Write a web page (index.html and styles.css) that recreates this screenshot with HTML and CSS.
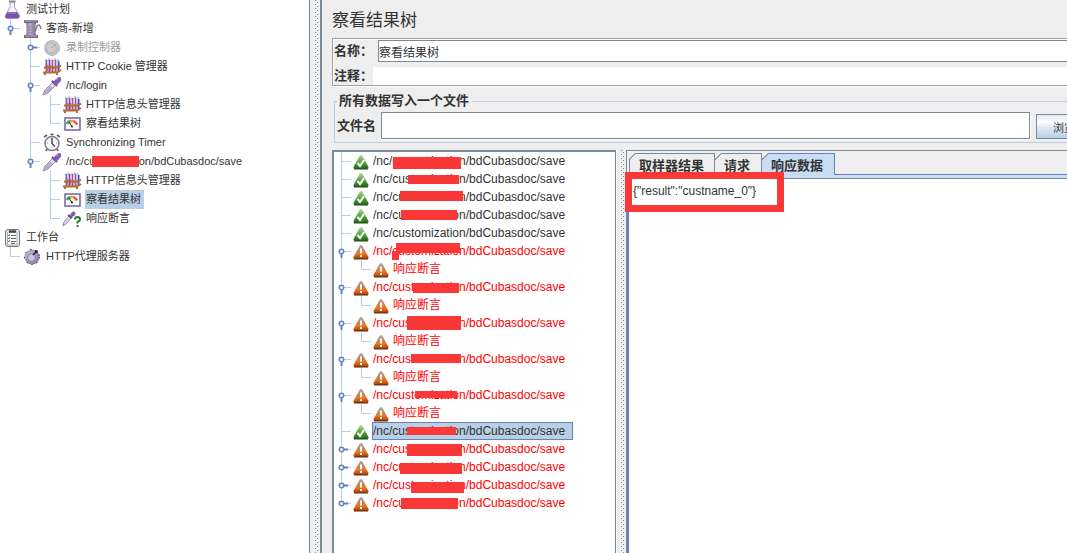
FILE: index.html
```
<!DOCTYPE html>
<html lang="zh-CN">
<head>
    <meta charset="UTF-8">
    <meta name="viewport" content="width=device-width, initial-scale=1.0">
    <title>察看结果树</title>
    <link rel="stylesheet" href="styles.css">
</head>
<body>
    <!-- Icon definitions -->
    <svg class="defs" width="0" height="0" aria-hidden="true">
        <defs>
            <linearGradient id="gGreen" x1="0" y1="0" x2="0" y2="1">
                <stop offset="0" stop-color="#b5d3a4"/><stop offset=".5" stop-color="#58a83c"/><stop offset="1" stop-color="#1d6414"/>
            </linearGradient>
            <linearGradient id="gOrange" x1="0" y1="0" x2="0" y2="1">
                <stop offset="0" stop-color="#a9a9a9"/><stop offset=".35" stop-color="#c08a60"/><stop offset=".65" stop-color="#ee7420"/><stop offset="1" stop-color="#9a3c05"/>
            </linearGradient>
            <radialGradient id="gDisc" cx=".4" cy=".4" r=".6">
                <stop offset="0" stop-color="#dcd6ec"/><stop offset="1" stop-color="#8578a8"/>
            </radialGradient>
            <linearGradient id="gSpool">
                <stop offset="0" stop-color="#746786"/><stop offset=".4" stop-color="#b9afc9"/><stop offset="1" stop-color="#74687f"/>
            </linearGradient>
        </defs>
        <symbol id="flask" viewBox="0 0 20 20">
            <path d="M8 2v5L3.500 15.500Q3 18 5 18h11q2-.500 1.500-2.500L12.500 7V2z" fill="#f4f2f8" stroke="#a9a4b4"/>
            <path d="M5.500 12h9.500l2.500 4q0 2.500-2 2.500H5q-2.500-.500-1.500-3z" fill="#7b51b0"/>
            <path d="M6 13h8" stroke="#a98ad0"/>
            <path d="M7 1.500h6.500" stroke="#8d8798" stroke-width="2"/>
        </symbol>
        <symbol id="spool" viewBox="0 0 20 20">
            <path d="M3.500 3h11l-1 3v8l1 3h-11l1-3V6z" fill="url(#gSpool)"/>
            <path d="M2 2.500h14M2 17.500h14" stroke="#75698a" stroke-width="3"/>
            <path d="M3 2h12M3 17h12" stroke="#b9afc6"/>
            <path d="M5 8h8M5 11h8M5 14h8" stroke="#9589a6"/>
            <path d="M13 13l2-6q2-2 3 0l1 3" fill="none" stroke="#84798f" stroke-width="1.500"/>
        </symbol>
        <symbol id="disabled" viewBox="0 0 20 20">
            <circle cx="10" cy="10" r="7.500" fill="#c5c5c5" stroke="#bbb"/>
            <circle cx="9" cy="10" r="5" fill="#cdcdcd" stroke="#bbb"/>
            <path d="M9 10l5-4M5 5l1 1M4 12h2M10 16v-2M15 13l-1-1" stroke="#a5a5a5"/>
        </symbol>
        <symbol id="rack" viewBox="0 0 20 20">
            <path d="M4.500 3v12M13.500 3v12" stroke="#7264ba" stroke-width="2"/>
            <path d="M7.500 3v12M16.500 4v10" stroke="#514dbd" stroke-width="2"/>
            <path d="M10.500 3v12" stroke="#e33560" stroke-width="2"/>
            <path d="M5 7v7M8 8v5" stroke="#d83c65"/>
            <path d="M6 4v4M9 3v5M12 4v5M15 3v5" stroke="#e4e1f4"/>
            <path d="M3 3h2M6 2h2M9 3h2M12 2h2M15 3h2" stroke="#9b93b6"/>
            <path d="M2 10.500h14l3-2M1 15.500h14l4-2.500M3 15v3M15 15v3" fill="none" stroke="#b46a2a" stroke-width="2"/>
        </symbol>
        <symbol id="dropper" viewBox="0 0 20 20">
            <path d="M1 19l2-5L11 6l3 3-8 8z" fill="#ddd8e6" stroke="#948ba2"/>
            <path d="M3 15l5-5 3 2-5 5-4 1z" fill="#b5a6d2"/>
            <path d="M10 5l5 5" stroke="#5c4788" stroke-width="2"/>
            <path d="M11 6l4-4q3-2 4 0t-1 4l-4 4z" fill="#7f5cb5"/>
            <path d="M14 4l2-1.500" stroke="#b49bd8"/>
        </symbol>
        <symbol id="gauge" viewBox="0 0 20 20">
            <path d="M3 4h15v12H3z" fill="#fff" stroke="#7462a5" stroke-width="1.500"/>
            <path d="M5 10q1-3 4-3" fill="none" stroke="#2eae55" stroke-width="2.500"/>
            <path d="M8 7.500q3-1 5 0" fill="none" stroke="#f49a4a" stroke-width="2.500"/>
            <path d="M12 7.500q2 1 3 3" fill="none" stroke="#ee4a35" stroke-width="2.500"/>
            <path d="M7 8l3 4.500" stroke="#222"/>
            <circle cx="10" cy="12.500" r="1" fill="#222"/>
        </symbol>
        <symbol id="clock" viewBox="0 0 20 20">
            <path d="M2 4l3-2M15 2l3 2M5 16l-1 2M15 16l1 2" stroke="#6d667a" stroke-width="2"/>
            <circle cx="10" cy="10.500" r="7" fill="#f8f8fb" stroke="#827b8d" stroke-width="1.500"/>
            <path d="M8.500 1.500h3M10 5v5.500l3 3" fill="none" stroke="#4b4556" stroke-width="1.500"/>
            <path d="M5 10h1M14 10h1M10 14v1" stroke="#999"/>
        </symbol>
        <symbol id="assert" viewBox="0 0 20 20">
            <path d="M1 17l1-4 6-7 2 2-6 7z" fill="#ddd8e6" stroke="#948ba2"/>
            <path d="M6 6l4 3" stroke="#5c4788" stroke-width="2"/>
            <path d="M8 6l2-3q2-1 3 0t0 3l-2 2z" fill="#7f5cb5"/>
            <path d="M13 10.500q0-2.500 2.500-2.500t2.500 2.500q0 1.500-2.500 2.500v1.500M15.500 16v2" fill="none" stroke="#287a28" stroke-width="2"/>
        </symbol>
        <symbol id="clipboard" viewBox="0 0 20 20">
            <rect x="3.500" y="1.500" width="14" height="17" rx="2.500" fill="#ededf0" stroke="#77757c"/>
            <path d="M5.500 4h9.500v13H5.500z" fill="#fff" stroke="#aaa"/>
            <path d="M7 3.500h7" stroke="#444" stroke-width="2.500"/>
            <path d="M9 7.500h5M9 10.500h5M9 13.500h5M9 15.500h4" stroke="#666"/>
            <path d="M6 7l1 1 1-2M6 10l1 1 1-2M6 13l1 1 1-2" fill="none" stroke="#3b9a48"/>
        </symbol>
        <symbol id="proxy" viewBox="0 0 20 20">
            <circle cx="10" cy="10" r="7.500" fill="url(#gDisc)"/>
            <circle cx="10" cy="10" r="7.500" fill="none" stroke="#34303e" stroke-dasharray="1.500 4"/>
            <circle cx="9.500" cy="10.500" r="4" fill="#c9c1dd" stroke="#8579a5"/>
            <path d="M11 8l4-4M13 4h2v2" fill="none" stroke="#222" stroke-width="1.500"/>
        </symbol>
        <symbol id="ok" viewBox="0 0 16 16">
            <path d="M6.500 2Q8 0 9.500 2L15.500 13Q16 15 14 15H2Q0 15 .500 13z" fill="url(#gGreen)"/>
            <path d="M1 15h14" stroke="#234c1b"/>
            <path d="M4.500 9l2.500 3L11 6" fill="none" stroke="#fff" stroke-width="2"/>
        </symbol>
        <symbol id="warn" viewBox="0 0 16 16">
            <path d="M6.500 2Q8 0 9.500 2L15.500 13Q16 15 14 15H2Q0 15 .500 13z" fill="url(#gOrange)"/>
            <path d="M1 15h14" stroke="#5a2b12"/>
            <path d="M8 4.500v5M8 11v2" stroke="#fff" stroke-width="2"/>
        </symbol>
        <symbol id="open" viewBox="0 0 12 17">
            <circle cx="4.500" cy="8.500" r="2.250" fill="#fff" stroke="#6382bf" stroke-width="1.500"/>
            <path d="M4.500 11v4" stroke="#6382bf" stroke-width="2"/>
        </symbol>
        <symbol id="closed" viewBox="0 0 12 17">
            <circle cx="4.500" cy="8.500" r="2.250" fill="#fff" stroke="#6382bf" stroke-width="1.500"/>
            <path d="M7 8.500h4" stroke="#6382bf" stroke-width="2"/>
        </symbol>
    </svg>

    <div class="app">
        <nav class="plan">
            <ul class="tree plan-tree">
                <li>
                    <div class="row"><svg class="icon"><use href="#flask"/></svg><span class="label">测试计划</span></div>
                    <ul>
                        <li>
                            <div class="row"><button class="handle" aria-label="折叠"><svg><use href="#open"/></svg></button><svg class="icon"><use href="#spool"/></svg><span class="label">客商-新增</span></div>
                            <ul>
                                <li><div class="row"><button class="handle" aria-label="展开"><svg><use href="#closed"/></svg></button><svg class="icon"><use href="#disabled"/></svg><span class="label off">录制控制器</span></div></li>
                                <li><div class="row"><svg class="icon"><use href="#rack"/></svg><span class="label">HTTP Cookie 管理器</span></div></li>
                                <li>
                                    <div class="row"><button class="handle" aria-label="折叠"><svg><use href="#open"/></svg></button><svg class="icon"><use href="#dropper"/></svg><span class="label">/nc/login</span></div>
                                    <ul>
                                        <li><div class="row"><svg class="icon"><use href="#rack"/></svg><span class="label">HTTP信息头管理器</span></div></li>
                                        <li><div class="row"><svg class="icon"><use href="#gauge"/></svg><span class="label">察看结果树</span></div></li>
                                    </ul>
                                </li>
                                <li><div class="row"><svg class="icon"><use href="#clock"/></svg><span class="label">Synchronizing Timer</span></div></li>
                                <li>
                                    <div class="row"><button class="handle" aria-label="折叠"><svg><use href="#open"/></svg></button><svg class="icon"><use href="#dropper"/></svg><span class="label">/nc/customization/bdCubasdoc/save<i class="mask m0"></i></span></div>
                                    <ul>
                                        <li><div class="row"><svg class="icon"><use href="#rack"/></svg><span class="label">HTTP信息头管理器</span></div></li>
                                        <li><div class="row"><svg class="icon"><use href="#gauge"/></svg><span class="label selected">察看结果树</span></div></li>
                                        <li><div class="row"><svg class="icon"><use href="#assert"/></svg><span class="label">响应断言</span></div></li>
                                    </ul>
                                </li>
                            </ul>
                        </li>
                    </ul>
                </li>
                <li>
                    <div class="row"><svg class="icon"><use href="#clipboard"/></svg><span class="label">工作台</span></div>
                    <ul>
                        <li><div class="row"><svg class="icon"><use href="#proxy"/></svg><span class="label">HTTP代理服务器</span></div></li>
                    </ul>
                </li>
            </ul>
        </nav>

        <div class="divider"></div>

        <main class="editor">
            <h1>察看结果树</h1>

            <div class="info">
                <div class="field">
                    <label for="name">名称：</label>
                    <input type="text" id="name" value="察看结果树">
                </div>
                <div class="field comment">
                    <label for="comment">注释：</label>
                    <input type="text" id="comment">
                </div>
            </div>

            <fieldset>
                <legend>所有数据写入一个文件</legend>
                <div class="file-row">
                    <label for="filename">文件名</label>
                    <input type="text" id="filename">
                    <button class="browse">浏览...</button>
                </div>
            </fieldset>

            <div class="results">
                <div class="samples">
                    <ul class="tree sample-tree">
                        <li><div class="row"><svg class="icon"><use href="#ok"/></svg><span class="label">/nc/customization/bdCubasdoc/save<i class="mask m1"></i></span></div></li>
                        <li><div class="row"><svg class="icon"><use href="#ok"/></svg><span class="label">/nc/customization/bdCubasdoc/save<i class="mask m2"></i></span></div></li>
                        <li><div class="row"><svg class="icon"><use href="#ok"/></svg><span class="label">/nc/customization/bdCubasdoc/save<i class="mask m3"></i></span></div></li>
                        <li><div class="row"><svg class="icon"><use href="#ok"/></svg><span class="label">/nc/customization/bdCubasdoc/save<i class="mask m4"></i></span></div></li>
                        <li><div class="row"><svg class="icon"><use href="#ok"/></svg><span class="label">/nc/customization/bdCubasdoc/save</span></div></li>
                        <li class="failed">
                            <div class="row"><button class="handle" aria-label="折叠"><svg><use href="#open"/></svg></button><svg class="icon"><use href="#warn"/></svg><span class="label">/nc/customization/bdCubasdoc/save<i class="mask m5"></i><i class="mask m6"></i></span></div>
                            <ul><li><div class="row"><svg class="icon"><use href="#warn"/></svg><span class="label">响应断言</span></div></li></ul>
                        </li>
                        <li class="failed">
                            <div class="row"><button class="handle" aria-label="折叠"><svg><use href="#open"/></svg></button><svg class="icon"><use href="#warn"/></svg><span class="label">/nc/customization/bdCubasdoc/save<i class="mask m7"></i></span></div>
                            <ul><li><div class="row"><svg class="icon"><use href="#warn"/></svg><span class="label">响应断言</span></div></li></ul>
                        </li>
                        <li class="failed">
                            <div class="row"><button class="handle" aria-label="折叠"><svg><use href="#open"/></svg></button><svg class="icon"><use href="#warn"/></svg><span class="label">/nc/customization/bdCubasdoc/save<i class="mask m8"></i></span></div>
                            <ul><li><div class="row"><svg class="icon"><use href="#warn"/></svg><span class="label">响应断言</span></div></li></ul>
                        </li>
                        <li class="failed">
                            <div class="row"><button class="handle" aria-label="折叠"><svg><use href="#open"/></svg></button><svg class="icon"><use href="#warn"/></svg><span class="label">/nc/customization/bdCubasdoc/save<i class="mask m9"></i></span></div>
                            <ul><li><div class="row"><svg class="icon"><use href="#warn"/></svg><span class="label">响应断言</span></div></li></ul>
                        </li>
                        <li class="failed">
                            <div class="row"><button class="handle" aria-label="折叠"><svg><use href="#open"/></svg></button><svg class="icon"><use href="#warn"/></svg><span class="label">/nc/customization/bdCubasdoc/save<i class="mask m10"></i></span></div>
                            <ul><li><div class="row"><svg class="icon"><use href="#warn"/></svg><span class="label">响应断言</span></div></li></ul>
                        </li>
                        <li><div class="row"><svg class="icon"><use href="#ok"/></svg><span class="label selected">/nc/customization/bdCubasdoc/save<i class="mask m11"></i></span></div></li>
                        <li class="failed"><div class="row"><button class="handle" aria-label="展开"><svg><use href="#closed"/></svg></button><svg class="icon"><use href="#warn"/></svg><span class="label">/nc/customization/bdCubasdoc/save<i class="mask m12"></i></span></div></li>
                        <li class="failed"><div class="row"><button class="handle" aria-label="展开"><svg><use href="#closed"/></svg></button><svg class="icon"><use href="#warn"/></svg><span class="label">/nc/customization/bdCubasdoc/save<i class="mask m13"></i></span></div></li>
                        <li class="failed"><div class="row"><button class="handle" aria-label="展开"><svg><use href="#closed"/></svg></button><svg class="icon"><use href="#warn"/></svg><span class="label">/nc/customization/bdCubasdoc/save<i class="mask m14"></i></span></div></li>
                        <li class="failed"><div class="row"><button class="handle" aria-label="展开"><svg><use href="#closed"/></svg></button><svg class="icon"><use href="#warn"/></svg><span class="label">/nc/customization/bdCubasdoc/save<i class="mask m15"></i></span></div></li>
                    </ul>
                </div>

                <div class="divider"></div>

                <div class="detail">
                    <div class="tabs">
                        <button class="tab">取样器结果</button>
                        <button class="tab">请求</button>
                        <button class="tab active">响应数据</button>
                    </div>
                    <div class="response">{"result":"custname_0"}</div>
                    <div class="highlight"></div>
                </div>
            </div>
        </main>
    </div>
</body>
</html>
```

FILE: styles.css
```
* {
    box-sizing: border-box;
}
body {
    margin: 0;
    height: 100vh;
    overflow: hidden;
    background-color: #eee;
    color: #333;
    font-family: "Liberation Sans", "Noto Sans CJK SC", sans-serif;
    font-size: 12px;
}
button,
input {
    font-family: inherit;
    color: inherit;
    margin: 0;
}
.defs {
    position: absolute;
}
.app {
    display: flex;
    height: 100%;
    overflow: hidden;
}
.plan {
    flex: 0 0 310px;
    background-color: #fff;
    border-right: 1px solid #7a8a99;
    overflow: hidden;
}
.divider {
    flex: 0 0 9px;
    margin-left: 1px;
    background-image:
        linear-gradient(#7a8a99 1px, transparent 1px),
        linear-gradient(#7a8a99 1px, transparent 1px);
    background-size: 1px 4px;
    background-position: 4px 0, 6px 2px;
    background-repeat: repeat-y;
}

/* Trees: connector lines are painted as backgrounds */
.tree {
    --line: 10px;
    --gutter: 22px;
    --row: 19px;
    --mid: 9px;
}
.tree,
.tree ul {
    list-style: none;
    margin: 0;
    padding: 0;
}
.tree ul ul {
    margin-left: 20px;
}
.tree li li,
.sample-tree > li {
    background: linear-gradient(#b8cfe5, #b8cfe5) var(--line) 0 / 1px 100% no-repeat;
}
.tree li li:last-child,
.sample-tree > li:last-child {
    background-size: 1px var(--mid);
}
.row {
    display: flex;
    align-items: center;
    height: var(--row);
    padding-left: var(--gutter);
    white-space: nowrap;
    background: linear-gradient(#b8cfe5, #b8cfe5) var(--line) var(--mid) / 10px 1px no-repeat;
}
.plan-tree > li > .row {
    padding-left: 2px;
    background: none;
}
.handle {
    display: flex;
    width: 12px;
    height: 17px;
    margin-left: calc(var(--line) - 4px - var(--gutter));
    margin-right: calc(var(--gutter) - var(--line) - 8px);
    padding: 0;
    border: none;
    background: none;
}
.handle svg {
    width: 12px;
    height: 17px;
}
.icon {
    flex: none;
    width: 20px;
    height: 20px;
}
.label {
    position: relative;
    margin-left: 3px;
    padding: 0 3px 0 1px;
    height: 100%;
    line-height: var(--row);
}
.plan-tree {
    font-size: 11px;
}
.off {
    color: #999;
}
.selected {
    background-color: #b8cfe5;
}
.sample-tree {
    --line: 7px;
    --gutter: 19px;
    --row: 18px;
}
.sample-tree ul {
    margin-left: 20px;
}
.sample-tree .icon {
    width: 16px;
    height: 16px;
    margin-top: 2px;
}
.sample-tree .selected {
    padding-right: 8px;
    box-shadow: inset 0 0 0 1px #6382bf;
}
.failed {
    color: #f00;
}

/* Painted-over parts of the request paths */
.mask {
    position: absolute;
    background-color: #fa3838;
}
.m0 { left: 27px; top: 4px; width: 47px; height: 11px; }
.m1 { left: 21px; top: 5px; width: 68px; height: 12px; }
.m2 { left: 36px; top: 5px; width: 51px; height: 9px; }
.m3 { left: 28px; top: 3px; width: 63px; height: 10px; }
.m4 { left: 29px; top: 4px; width: 56px; height: 10px; }
.m5 { left: 24px; top: 1px; width: 64px; height: 10px; }
.m6 { left: 20px; top: 9px; width: 7px; height: 9px; }
.m7 { left: 41px; top: 5px; width: 46px; height: 10px; }
.m8 { left: 35px; top: 2px; width: 54px; height: 14px; }
.m9 { left: 39px; top: 4px; width: 50px; height: 9px; }
.m10 { left: 43px; top: 5px; width: 42px; height: 7px; }
.m11 { left: 35px; top: 5px; width: 49px; height: 8px; }
.m12 { left: 35px; top: 4px; width: 55px; height: 12px; }
.m13 { left: 28px; top: 5px; width: 62px; height: 11px; }
.m14 { left: 39px; top: 6px; width: 53px; height: 11px; }
.m15 { left: 29px; top: 4px; width: 57px; height: 11px; }

/* The editor runs past the right edge of the window */
.editor {
    flex: 1;
    display: flex;
    flex-direction: column;
    min-width: 0;
    margin-right: -60px;
    padding-left: 10px;
    border-left: 2px solid #7a8a99;
}
h1 {
    margin: 0;
    padding-top: 4px;
    font-size: 17px;
    font-weight: normal;
    line-height: 34px;
}
.info {
    display: flex;
    flex-direction: column;
    gap: 5px;
    padding: 1px 0 0 1px;
    border: 1px solid #a0a0a0;
    box-shadow: inset 1px 1px #fff, 0 1px #fff;
}
.field {
    display: flex;
    align-items: center;
    gap: 5px;
    height: 22px;
}
.comment {
    gap: 0;
    height: 18px;
}
.editor label,
legend {
    font-size: 13px;
    font-weight: bold;
    line-height: 14px;
}
.field input {
    flex: 1;
    height: 100%;
    padding: 0;
    border: 1px solid #7a8a99;
    font-size: 12px;
}
.comment input {
    border: none;
}
fieldset {
    min-width: 0;
    margin: 8px 0 0 2px;
    padding: 4px 2px 3px;
    border: 1px solid #b8cfe5;
}
legend {
    padding: 0 3px 0 2px;
}
.file-row {
    display: flex;
    align-items: center;
    height: 27px;
}
.file-row input {
    flex: 1;
    height: 100%;
    margin: 0 6px 0 5px;
    border: 1px solid #7a8a99;
    box-shadow: 1px 1px #fff;
}
.browse {
    width: 88px;
    height: 25px;
    padding: 0 16px;
    border: 1px solid #7a8a99;
    background: linear-gradient(#dde8f3, #fff 30%, #dde8f3 55%, #b8cfe5);
    font-size: 11px;
    text-align: left;
    align-self: flex-end;
}
.results {
    flex: 1;
    display: flex;
    min-height: 0;
    margin-top: 7px;
}
.samples {
    flex: 0 0 284px;
    background-color: #fff;
    border: 2px solid #7a8a99;
    border-width: 2px 1px 0 2px;
    box-shadow: 1px 0 #fff;
}
.detail {
    position: relative;
    flex: 1;
    display: flex;
    flex-direction: column;
    border-top: 1px solid #7a8a99;
    border-left: 1px solid #7a8a99;
}
.tabs {
    display: flex;
    align-items: flex-end;
    height: 24px;
    padding-left: 2px;
    border-bottom: 1px solid #6382bf;
}
.tab {
    height: 21px;
    padding: 0 10px 0 9px;
    border: 1px solid #7a8a99;
    border-width: 1px 1px 0 1px;
    background: linear-gradient(135deg, #7a8a99 5px, #eee 5px) border-box;
    clip-path: polygon(6px 0, 100% 0, 100% 100%, 0 100%, 0 6px);
    font-size: 13px;
    font-weight: bold;
}
.tab + .tab {
    padding: 0 11px 0 9px;
    border-left: none;
}
.tab.active {
    height: 22px;
    margin-bottom: -1px;
    border-color: #6382bf;
    background: linear-gradient(135deg, #6382bf 5px, #c8ddf2 5px) border-box;
}
.response {
    flex: 1;
    padding: 4px;
    background-color: #fff;
    border-top: 1px solid #7a8a99;
    border-left: 2px solid #6382bf;
    box-shadow: 0 -3px #c8ddf2;
    margin-top: 3px;
    line-height: 16px;
}
.highlight {
    position: absolute;
    left: -2px;
    top: 21px;
    width: 159px;
    height: 40px;
    border: 7px solid #fa3838;
}
```
